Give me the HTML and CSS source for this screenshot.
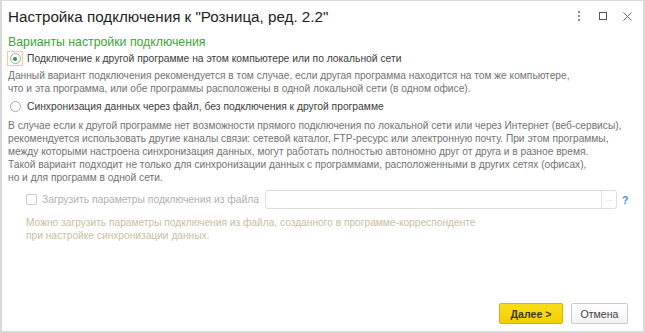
FILE: index.html
```html
<!DOCTYPE html><html lang="ru">
<head>
<meta charset="UTF-8">
<title>Настройка подключения</title>
<link rel="stylesheet" href="styles.css">
</head>
<body>
<div class="window">
<header class="titlebar">
<h1>Настройка подключения к "Розница, ред. 2.2"</h1>
<div class="controls">
<svg class="ctl-more" width="4" height="12" viewBox="0 0 4 12"><circle cx="2" cy="2" r="1" fill="#666"/><circle cx="2" cy="6" r="1" fill="#666"/><circle cx="2" cy="10" r="1" fill="#666"/></svg>
<svg class="ctl-max" width="8" height="8" viewBox="0 0 8 8"><rect x="0.5" y="0.5" width="7" height="7" fill="none" stroke="#555"/></svg>
<svg class="ctl-close" width="9" height="9" viewBox="0 0 9 9"><path d="M0.5 0.5L8.5 8.5M8.5 0.5L0.5 8.5" stroke="#666" stroke-width="1"/></svg>
</div>
</header>
<main class="content">
<h2 class="group">Варианты настройки подключения</h2>
<label class="option">
<span class="focus"><span class="radio checked"></span></span>
<span>Подключение к другой программе на этом компьютере или по локальной сети</span>
</label>
<p class="desc">Данный вариант подключения рекомендуется в том случае, если другая программа находится на том же компьютере,<br>что и эта программа, или обе программы расположены в одной локальной сети (в одном офисе).</p>
<label class="option">
<span class="focus nofocus"><span class="radio"></span></span>
<span>Синхронизация данных через файл, без подключения к другой программе</span>
</label>
<p class="desc desc-long">В случае если к другой программе нет возможности прямого подключения по локальной сети или через Интернет (веб-сервисы),<br>рекомендуется использовать другие каналы связи: сетевой каталог, FTP-ресурс или электронную почту. При этом программы,<br>между которыми настроена синхронизация данных, могут работать полностью автономно друг от друга и в разное время.<br>Такой вариант подходит не только для синхронизации данных с программами, расположенными в других сетях (офисах),<br>но и для программ в одной сети.</p>
<div class="file-row">
<label class="check"><span class="box"></span>Загрузить параметры подключения из файла</label>
<div class="field"><span class="field-input"></span><span class="field-btn">...</span></div>
<span class="help">?</span>
</div>
<p class="hint">Можно загрузить параметры подключения из файла, созданного в программе-корреспонденте<br>при настройке синхронизации данных.</p>
</main>
<footer class="actions">
<button class="btn primary">Далее &gt;</button>
<button class="btn">Отмена</button>
</footer>
</div>
</body>
</html>
```

FILE: styles.css
```css
*,*::before,*::after{margin:0;padding:0;box-sizing:border-box}
body{font-family:"Liberation Sans",Arial,sans-serif;background:#fff;color:#333}
.window{width:645px;height:333px;border:2px solid #d9d9d9;border-top-width:1px;display:flex;flex-direction:column;background:#fff}
.titlebar{display:flex;align-items:center;justify-content:space-between;padding:0 11px 0 6px;height:30px}
.titlebar h1{font-size:15.2px;font-weight:400;color:#1e1e1e}
.controls{display:flex;align-items:center}
.ctl-max{margin-left:18px}
.ctl-close{margin-left:16px}
.content{flex:1;padding:3px 6px 0 6px}
.group{font-size:12.3px;font-weight:400;color:#3aa43c;line-height:16px}
.option{display:flex;align-items:center;gap:4px;font-size:10.3px;color:#3c3c3c;height:17px;margin-left:-1px}
.focus{width:16px;height:15px;border:1px solid #f2d470;display:flex;align-items:center;justify-content:center}
.focus.nofocus{border-color:transparent}
.radio{width:11px;height:11px;border:1px solid #a8a8a8;border-radius:50%;display:flex;align-items:center;justify-content:center;background:#fff}
.radio.checked::after{content:"";width:4px;height:4px;border-radius:50%;background:#2e9b3a}
.desc{font-size:10.2px;line-height:13px;color:#727272;margin:2px 0 3px 0}
.desc-long{margin-top:4px}
.file-row{display:flex;align-items:center;margin:6px 0 0 18px;height:19px}
.check{display:flex;align-items:center;gap:5px;font-size:10.3px;color:#b0b0b0;width:239px}
.box{width:11px;height:11px;border:1px solid #cbcbcb;border-radius:2px;background:#fff}
.field{display:flex;width:352px;height:19px;border:1px solid #dcdcdc;border-radius:3px}
.field-input{flex:1}
.field-btn{width:15px;border-left:1px solid #e2e2e2;font-size:8px;color:#c0c0c0;text-align:center;line-height:15px}
.help{margin-left:5px;font-size:10.5px;font-weight:700;color:#4a8fd6}
.hint{font-size:10.2px;line-height:13px;color:#cbbd9f;margin:7px 0 0 18px}
.actions{display:flex;justify-content:flex-end;gap:8px;padding:0 15px 7px 0}
.btn{font-family:inherit;font-size:10.6px;height:21px;border:1px solid #c9c9c9;border-radius:2px;background:linear-gradient(#fff,#f3f3f3);color:#444;width:57px}
.btn.primary{background:linear-gradient(#f9dc1c,#f2d000);border-color:#d4b600;font-weight:700;color:#3b3a20;width:64px}
```
